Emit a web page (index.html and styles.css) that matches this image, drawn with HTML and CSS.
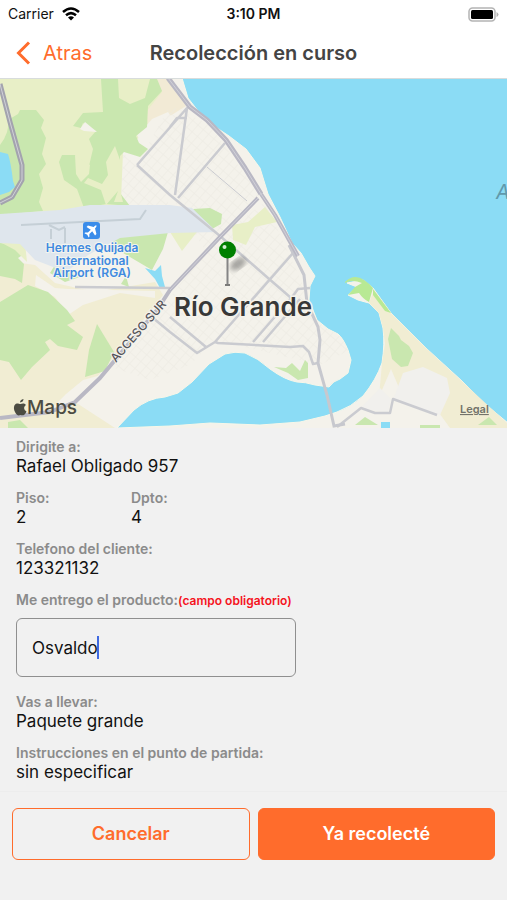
FILE: index.html
```html
<!DOCTYPE html>
<html lang="es">
<head>
<meta charset="utf-8">
<meta name="viewport" content="width=device-width, initial-scale=1">
<title>Recolección en curso</title>
<link rel="stylesheet" href="styles.css">
</head>
<body>
<div class="status">
  <div class="carrier">Carrier
    <svg width="18" height="14" viewBox="0 0 18 14" aria-hidden="true"><g fill="none" stroke="#000" stroke-width="2.5"><path d="M1 5Q9-2 17 5"/><path d="M4 8.300Q9 4 14 8.300"/></g><path d="M6 10.500Q9 8 12 10.500L9 13.500Z"/></svg>
  </div>
  <div class="time">3:10 PM</div>
  <svg class="battery" width="31" height="15" viewBox="0 0 31 15" aria-hidden="true"><rect x="1" y="1" width="26" height="13" rx="3.500" fill="#fff" stroke="#b4b4b4" stroke-width="1.500"/><rect x="3" y="3" width="22" height="9" rx="1.500"/><path d="M28.500 5v5q2-1 2-2.500t-2-2.500" fill="#b4b4b4"/></svg>
</div>
<header class="nav">
  <a class="back" href="#"><svg width="15" height="24" viewBox="0 0 15 24" aria-hidden="true"><path d="M13 1.500 2.500 12 13 22.500" fill="none" stroke="#ff6c2c" stroke-width="3"/></svg>Atras</a>
  <h1>Recolección en curso</h1>
</header>
<main>
<svg class="map" viewBox="0 79 507 349" role="img" aria-label="Mapa de Río Grande">
  <defs>
    <pattern id="blocks" width="7" height="9" patternUnits="userSpaceOnUse" patternTransform="rotate(41)"><path d="M0 0H7M0 0V9" stroke="#ebe9e2" stroke-width="1" fill="none"/></pattern>
    <filter id="soft"><feGaussianBlur stdDeviation="2.500"/></filter>
  </defs>
  <rect y="79" width="507" height="349" fill="#f4f2eb"/>
  <path fill="#e8efc7" d="M0 79H165L158 120 123 152 121 200 130 206 0 216Z"/>
  <path fill="#f2ead5" d="M157 79H172L186 106 170 116 148 125 146 112 162 92Z"/>
  <path fill="#f1edd3" d="M0 260 35 265 55 283 95 292 155 282 163 295 110 362 75 402 115 428H0Z"/>
  <path fill="#f4f2eb" d="M168 112 152 119 145 127 137 135 141 143 151 149 168 158 180 128ZM36 275 55 288 68 289 155 291 155 298 120 293 83 305 68 315 55 297 35 286ZM83 380 105 374 75 402 52 408 66 394Z"/>
  <path fill="url(#blocks)" d="M170 105 210 125 260 196 205 250 170 195 137 165ZM215 240 265 202 310 300 350 350 320 365 215 340 190 365 150 380 105 365 160 310ZM123 153 168 195 168 205H130L121 195Z"/>
  <g fill="#c9e7af">
    <path d="M20 110 36 110 44 120 41 128 46 138 42 154 46 164 39 174 43 188 39 202 43 211 0 215V145Q10 132 8 120L18 114Z"/>
    <path d="M101 79 103 112 83 113 73 126 81 128 83 123 96 131 89 139 93 149 89 166 83 170 75 155 62 155 59 162 64 180 77 189 84 208 106 204 130 206 120 193 120 156 124 152 140 157 148 149 139 143 136 136 147 127 148 106 162 91 157 79Z"/>
    <path d="M0 302 28 285 48 292 67 310 75 321 67 325 83 337 77 350 58 346 50 339 45 342 50 350 32 367 21 380 9 362 0 360Z"/>
    <path d="M97 324 114 352 105 371 85 377 89 350Z"/>
    <path d="M110 237 140 233 168 232 163 249 152 270 118 250ZM0 243 18 245 24 254 18 258 24 264 22 283 15 279 0 276ZM55 265 80 277 65 282 50 273ZM121 284 126 276 129 287ZM8 422 20 420 28 428H8Z"/>
    <path d="M193 209 210 208 222 214 221 224 212 229 200 219Z"/>
    <path d="M274 367 286 368 292 363 300 371 305 360 308 363 308 378 298 380 288 373Z"/>
  </g>
  <path fill="#e8efc7" d="M118 79 119 98 130 104 145 98 150 79ZM75 155 90 165 89 174 81 182 76 174ZM106 162 115 146 120 160 120 190 123 202 114 202 118 191 106 205 101 190 84 183 88 178 102 184 108 175ZM0 110 5 120 0 128ZM0 242 25 243 27 262 15 250ZM232 225 248 222 265 207 277 222 255 227 246 245 233 240ZM197 232 170 232 182 251Z"/>
  <path fill="#f4f2eb" d="M80 129 85 122 97 132 84 131Z"/>
  <path fill="#dfe6ed" d="M0 214 60 210 90 205 170 205 192 208 217 232 170 233 120 238 88 255 66 272 35 260 20 244 0 243Z"/>
  <g fill="none" stroke="#c5cfd6" stroke-width="2"><path d="M21 225 140 219 146 210M49 225 59 230 65 227M51 239V229M65 243V228M96 225V233"/></g>
  <path fill="#8bdcf5" stroke="#f8f7e9" stroke-width="1" d="M182 78 188 98 205 120 229 136 246 149 260 168 268 194 280 217 292 243 301 253 309 267 315 276 310 286 309 300 317 320 328 329 338 334Q343 338 348 350L351 360 348 373 340 379Q333 381 329 387L315 385Q305 382 297 382 285 380 270 369 258 358 245 353 235 351 225 354L209 364 192 382 178 393 165 397Q148 398 134 410L117 428 170 426 210 423 260 425 300 422 325 416 337 412Q351 407 363 396 376 380 382 363 385 344 383 328L379 313 369 303 358 300 348 295 357 287 347 283 363 280 373 288 391 313 427 349 462 381 485 404 508 423V78Z"/>
  <path fill="#8bdcf5" d="M0 152 8 154Q11 163 13 181L15 187 9 192 0 195ZM145 268 155 271 161 265 162 276 165 287 160 288 155 279ZM381 422H390V428H381Z"/>
  <path fill="#f1edd3" d="M369 303 374 290 391 313 427 349 507 423V428H450L437 410 400 390 391 369 379 397 382 363 385 344 383 328 379 313Z"/>
  <path fill="#f1f0ed" d="M403 373 423 367 447 378 450 393 440 415 393 400ZM361 408 380 388 391 399 388 413Z"/>
  <path fill="#b8e994" d="M345 282Q354 273 364 280 370 284 373 288L369 302Q363 299 359 293L348 295 355 287 362 283Q352 279 345 283ZM373 289 391 313 385 311 373 295Z"/>
  <path fill="#c9e7af" d="M391 328 399 336 401 340 409 346 413 353 408 366 401 367 392 359 388 339ZM355 425 365 417 378 425ZM478 425 489 417 497 425ZM420 425H440V428H420Z"/>
  <g fill="none" stroke="#cacbd0" stroke-width="2.500" stroke-linejoin="round">
    <path d="M137 165 187 108 175 195M137 165 170 195 220 236 268 278 305 310M170 127 177 118 187 118M225 143 178 198M293 253 215 342 197 353 170 332 153 318M170 317 206 347M215 342 218 343 290 347 303 346 309 352 313 364 318 363M292 297 253 342M300 299 263 342M310 288 298 289 290 300"/>
    <path d="M75 287 170 288"/>
    <path d="M337 427 361 408 375 413 390 413 393 399 437 415"/>
    <path stroke-width="1" d="M207 167 247 201"/>
  </g>
  <path d="M289 245 304 275 307 303 318 327 320 340 318 363 327 395 334 426 345 424" fill="none" stroke="#c7c8ce" stroke-width="3"/>
  <g fill="none" stroke-linejoin="round">
    <g stroke="#b9b8c4" stroke-width="5"><path d="M168 78 190 107 207 120 226 140 245 168 261 194" /><path stroke-width="4" d="M261 194 275 215 298 256M258 198 220 237 170 290 157 310 100 378 75 402 50 412 0 418"/><path d="M0 84 10 122 22 165V180L12 197 0 203" stroke="#a3a3ae"/></g>
    <path stroke="#d0d0d8" stroke-width="1" d="M168 78 190 107 207 120 226 140 245 168 261 194 275 215 298 256M258 198 220 237 170 290M0 84 10 122 22 165V180L12 197 0 203"/>
  </g>
  <rect x="83" y="222" width="17" height="17" rx="3" fill="#3a8cea"/>
  <path transform="translate(91.500 230.500) rotate(45)" d="M0-7Q1-7 1-4L6-1V1L1 0V4L3 6V7L0 6-3 7V6L-1 4V0L-6 1V-1L-1-4Q-1-7 0-7Z" fill="#fff"/>
  <g class="airport" text-anchor="middle"><text x="92" y="252">Hermes Quijada</text><text x="92" y="265">International</text><text x="92" y="277">Airport (RGA)</text></g>
  <text class="road" transform="translate(116 363) rotate(-49)">ACCESO SUR</text>
  <text class="sea" x="496" y="199">A</text>
  <ellipse cx="238" cy="264" rx="9" ry="5" transform="rotate(-35 238 264)" fill="#555" opacity=".5" filter="url(#soft)"/>
  <path d="M227.500 257V284" stroke="#858585" stroke-width="2"/><path d="M225 285H230" stroke="#555" stroke-width="1.500"/>
  <circle cx="227.500" cy="250" r="8.500" fill="#008000"/><circle cx="224.500" cy="247" r="2" fill="#d4efd4"/>
  <text class="city" x="243" y="316" text-anchor="middle">Río Grande</text>
  <path fill="#4c4c42" d="M20.500 404C22 403.500 24 402.500 26 405 23 407 24 410 26.500 411.500 25 415 23 416 20.500 415 18 416 16.500 415 15 412 13 408 14 404 17 403.500 18.500 403.500 19.500 404 20.500 404ZM20 402.500Q20 399.500 23.500 399 23.500 402 20 402.500Z"/>
  <text class="brand" x="27" y="414">Maps</text>
  <a href="#"><text class="legal" x="460" y="413">Legal</text></a>
</svg>
<form>
  <div class="details">
    <div class="item"><div class="label">Dirigite a:</div><div class="value">Rafael Obligado 957</div></div>
    <div class="pair">
      <div class="item"><div class="label">Piso:</div><div class="value">2</div></div>
      <div class="item"><div class="label">Dpto:</div><div class="value">4</div></div>
    </div>
    <div class="item"><div class="label">Telefono del cliente:</div><div class="value">123321132</div></div>
    <div class="field">
      <label class="label" for="persona">Me entrego el producto:<span class="required">(campo obligatorio)</span></label>
      <div class="entry"><input id="persona" type="text" value="Osvaldo" required><span class="caret"></span></div>
    </div>
    <div class="item"><div class="label">Vas a llevar:</div><div class="value">Paquete grande</div></div>
    <div class="item"><div class="label">Instrucciones en el punto de partida:</div><div class="value">sin especificar</div></div>
  </div>
  <div class="actions"><button type="button" class="cancel">Cancelar</button><button type="submit" class="confirm">Ya recolecté</button></div>
</form>
</main>
</body>
</html>
```
FILE: styles.css
```css
* { box-sizing: border-box; }
body {
  margin: 0;
  min-height: 100vh;
  background: #f1f1f1;
  color: #111;
  font-family: Inter, "Liberation Sans", sans-serif;
}
.status, .nav {
  display: grid;
  grid-template-columns: 1fr auto 1fr;
  align-items: center;
  background: #fff;
}
.status { height: 28px; padding: 0 8px; font-size: 14px; line-height: 20px; }
.carrier { display: flex; align-items: center; gap: 8px; }
.time { font-weight: 600; }
.battery { justify-self: end; }
.nav { height: 51px; padding: 0 16px; border-bottom: 1px solid #d8dcdc; }
.back {
  display: flex;
  align-items: center;
  gap: 12px;
  color: #ff6c2c;
  font-size: 20px;
  text-decoration: none;
}
h1 { margin: 0; color: #444; font-size: 20px; font-weight: 600; line-height: 24px; }
.map { display: block; width: 100%; height: auto; }
.map text { font-family: Inter, "Liberation Sans", sans-serif; }
.map .airport { fill: #3f8ae0; font-size: 12px; font-weight: 600; stroke: #f4f5ef; stroke-width: 2px; paint-order: stroke; }
.map .road { fill: #55555a; font-size: 12px; font-weight: 500; stroke: #f4f2eb; stroke-width: 2px; paint-order: stroke; }
.map .sea { fill: #6099ab; font-size: 20px; font-style: italic; }
.map .city { fill: #383838; font-size: 26px; font-weight: 600; stroke: #f4f2eb; stroke-width: 3px; paint-order: stroke; }
.map .brand { fill: #4c4c42; font-size: 19px; font-weight: 500; }
.map .legal { fill: #73736a; font-size: 11px; font-weight: 600; text-decoration: underline; }
form { margin: 0; }
.details { display: flex; flex-direction: column; gap: 13px; padding: 11px 16px 8px; border-bottom: 1px solid #ededed; }
.label { display: block; color: #8b8b8b; font-size: 14px; font-weight: 600; line-height: 16px; }
.value { font-size: 17px; line-height: 22px; }
.pair { display: grid; grid-template-columns: 115px 1fr; }
.required { color: #f5131d; font-size: 12px; }
.field { margin-bottom: 4px; }
.entry { position: relative; width: 59%; min-width: 240px; margin-top: 9px; }
input {
  display: block;
  width: 100%;
  height: 59px;
  padding: 0 15px;
  border: 1px solid #8f8f8f;
  border-radius: 6px;
  background: transparent;
  color: #111;
  font: 17px/22px Inter, "Liberation Sans", sans-serif;
}
.caret { position: absolute; top: 18px; left: 81px; width: 2px; height: 23px; background: #3f69e0; }
.actions { display: grid; grid-template-columns: 1fr 1fr; gap: 8px; padding: 16px 12px 40px; }
button {
  height: 52px;
  border: 1px solid #ff6c2c;
  border-radius: 6px;
  font: 600 18px/24px Inter, "Liberation Sans", sans-serif;
}
.cancel { background: transparent; color: #ff6c2c; }
.confirm { background: #ff6c2c; color: #fff; }
```
